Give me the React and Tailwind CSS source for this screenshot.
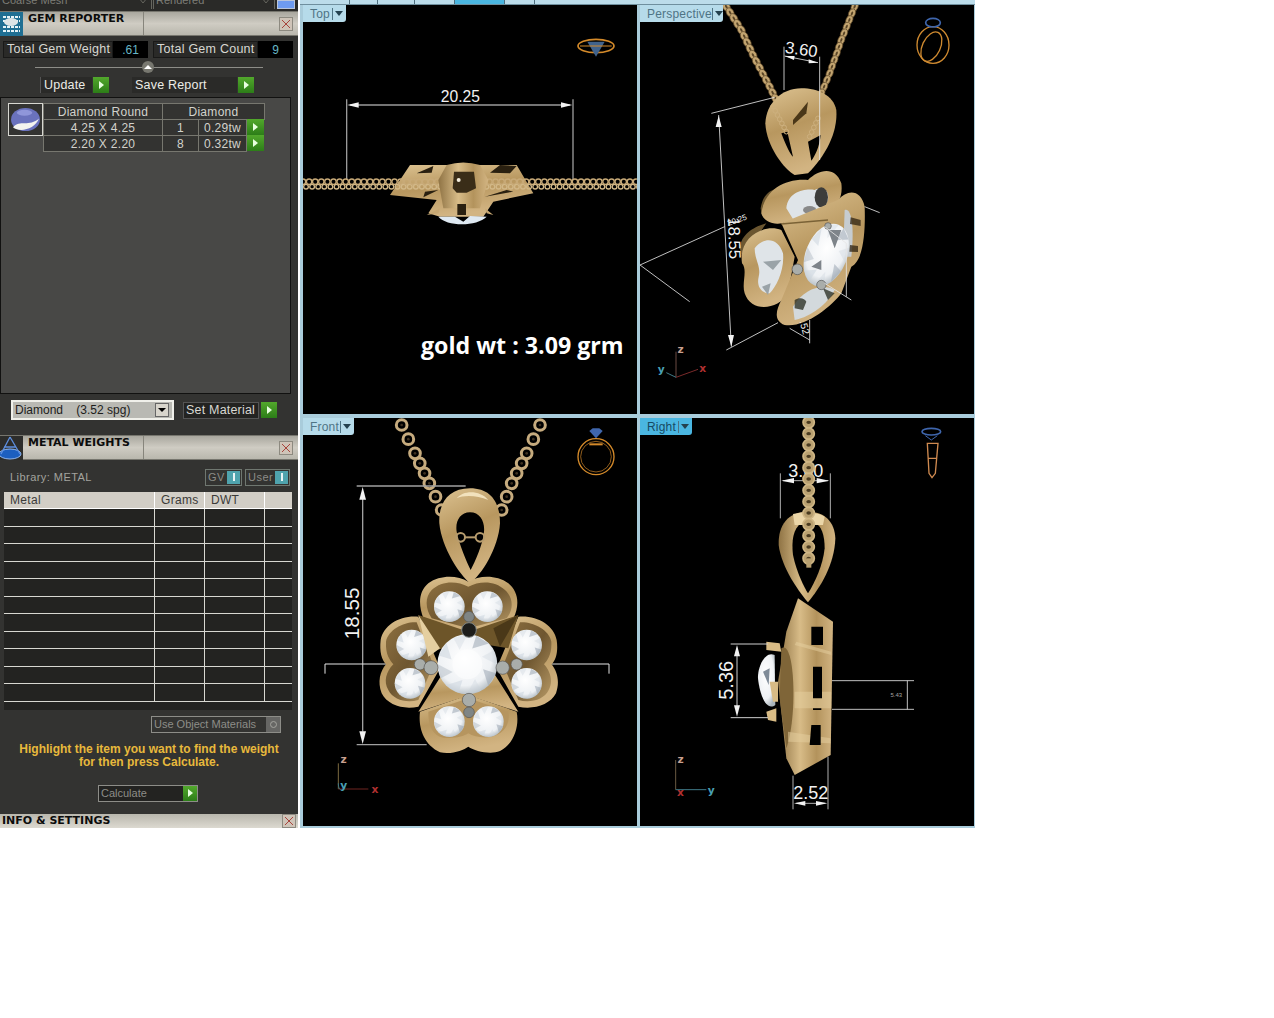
const along = (pts, step) => {
    const out = [];
    for (let i = 0; i < pts.length - 1; i++) {
        const [x1, y1] = pts[i];
        const [x2, y2] = pts[i + 1];
        const len = Math.hypot(x2 - x1, y2 - y1);
        const n = Math.max(1, Math.round(len / step));
        for (let k = 0; k < n; k++) out.push([x1 + ((x2 - x1) * k) / n, y1 + ((y2 - y1) * k) / n]);
    }
    out.push(pts[pts.length - 1]);
    return out;
};

const Play = ({ size = "w-4 h-4" }) => (
    <span className={`${size} shrink-0 flex items-center justify-center bg-gradient-to-b from-[#52a82c] to-[#2c7d18]`}>
        <span className="w-0 h-0 border-y-[4px] border-y-transparent border-l-[5px] border-l-[#e8ffe0]" />
    </span>
);

const Close = () => (
    <span className="w-[14px] h-[14px] flex items-center justify-center bg-[#cfc4b8] border border-[#8d8a80]">
        <svg viewBox="0 0 12 12" className="w-3 h-3">
            <path d="M2 2 L10 10 M10 2 L2 10" stroke="#a8443c" strokeWidth="1" />
        </svg>
    </span>
);

const PanelHeader = ({ title, icon }) => (
    <div className="h-[25px] flex bg-gradient-to-b from-[#a9a79e] via-[#cfccc3] to-[#b9b7ad] border-y border-[#77766e]">
        <div className="w-[23px] shrink-0">{icon}</div>
        <div className="w-[121px] pl-[5px] border-r border-[#87857c] font-['DejaVu_Sans'] font-bold text-[11px] leading-[11px] pt-[1px] text-[#0c0c0c] whitespace-nowrap">
            {title}
        </div>
        <div className="flex-1 flex justify-end items-center pr-[5px]">
            <Close />
        </div>
    </div>
);

const GemIcon = () => (
    <svg viewBox="0 0 23 24" className="w-[23px] h-[24px]">
        <rect width="23" height="24" fill="#1f6f93" />
        <path d="M3 5 H20 M3 9 H9 M15 9 H20 M3 19 H20 M3 15 H20" stroke="#e5f3f7" strokeWidth="2" strokeDasharray="3 1" />
        <ellipse cx="11" cy="10" rx="7" ry="4" fill="#dce4e6" />
    </svg>
);

const ScaleIcon = () => (
    <svg viewBox="0 0 23 24" className="w-[23px] h-[24px]">
        <rect width="23" height="24" fill="#2d2d2b" />
        <ellipse cx="10" cy="18" rx="11" ry="5" fill="#1c5fc0" stroke="#8fb6ee" />
        <path d="M10 1 L1 18 M10 1 L20 18 M4 11 H16" stroke="#5d8fe0" strokeWidth="1.3" fill="none" />
    </svg>
);

const StatBox = ({ label, value, labelW }) => (
    <div className="flex h-[17px] items-stretch">
        <div className={`${labelW} bg-[#2a2a28] border border-[#191918] flex items-center pl-[3px] text-[12.5px] tracking-[0.25px] text-[#d8d8d2] whitespace-nowrap`}>
            {label}
        </div>
        <div className="w-[35px] bg-black flex items-center justify-center text-[12px] text-[#68b8c8]">{value}</div>
    </div>
);

const GemCell = ({ className, children }) => (
    <div className={`border border-[#77776f] -ml-px -mt-px flex items-center justify-center text-[12px] tracking-[0.3px] text-[#d2d2cc] bg-[#333331] ${className}`}>
        {children}
    </div>
);

const GemRow = ({ size, count, weight }) => (
    <div className="flex h-[16px]">
        <GemCell className="w-[120px]">{size}</GemCell>
        <GemCell className="w-[37px]">{count}</GemCell>
        <GemCell className="w-[49px]">{weight}</GemCell>
        <span className="-mt-px"><Play size="w-[17px] h-[16px]" /></span>
    </div>
);

const ToggleChip = ({ label, w }) => (
    <div className={`${w} h-[17px] border border-[#6f7770] flex items-center justify-between pl-[2px] pr-px text-[11px] tracking-[0.5px] text-[#8d8d88]`}>
        {label}
        <span className="w-[13px] h-[13px] bg-[#4fa3ad] flex items-center justify-center">
            <span className="w-[2px] h-[8px] bg-[#e9f4f4]" />
        </span>
    </div>
);

const Chevron = () => (
    <svg viewBox="0 0 10 6" className="w-[10px] h-[6px] shrink-0 -mt-[2px]">
        <path d="M1 0 L5 5 L9 0" stroke="#66665f" fill="none" />
    </svg>
);

const rows = [0, 1, 2, 3, 4, 5, 6, 7, 8, 9, 10];

const Sidebar = () => (
    <div className="w-[298px] h-[828px] shrink-0 bg-[#333331] flex flex-col font-['Liberation_Sans',sans-serif] overflow-hidden">
        <div className="h-[11px] flex items-start gap-px bg-[#2a2a28] text-[11px] leading-[11px] text-[#7d7d77]">
            <div className="w-[152px] h-[9px] overflow-hidden border-r border-[#66665f] pl-[2px] flex justify-between pr-[3px]">
                <span className="-mt-[5px]">Coarse Mesh</span>
                <Chevron />
            </div>
            <div className="w-[122px] h-[9px] overflow-hidden border-x border-[#66665f] pl-[2px] flex justify-between pr-[3px]">
                <span className="-mt-[5px]">Rendered</span>
                <Chevron />
            </div>
            <div className="ml-[1px] w-[18px] h-[9px] bg-[#6e9bf0] border border-[#b9c5da]" />
        </div>
        <PanelHeader title="GEM REPORTER" icon={<GemIcon />} />

        <div className="flex justify-between pl-[3px] pr-[5px] mt-[5px]">
            <StatBox label="Total Gem Weight" value=".61" labelW="w-[110px]" />
            <StatBox label="Total Gem Count" value="9" labelW="w-[105px]" />
        </div>

        <div className="relative h-[19px] mx-[35px] flex items-center">
            <div className="w-full h-px bg-[#8d8d88]" />
            <span className="absolute left-[107px] top-[3px] w-[12px] h-[12px] rounded-full bg-[#77776f] flex items-center justify-center">
                <span className="w-0 h-0 border-x-[4px] border-x-transparent border-b-[4px] border-b-white" />
            </span>
        </div>

        <div className="flex h-[16px] pl-[40px] text-[12.5px] tracking-[0.2px] text-[#ecece6]">
            <div className="w-[52px] bg-[#2a2a28] border-l border-[#555] flex items-center pl-[3px]">Update</div>
            <span className="ml-[1px]"><Play /></span>
            <div className="ml-[23px] w-[105px] bg-[#2a2a28] flex items-center pl-[3px]">Save Report</div>
            <span className="ml-[1px]"><Play /></span>
        </div>

        <div className="mt-[4px] w-[291px] h-[297px] bg-[#484846] border border-[#111110] pl-[7px] pt-[5px] flex">
            <div className="w-[35px] h-[33px] shrink-0 bg-[#333331] border border-[#d8d8d2] flex items-center justify-center">
                <svg viewBox="0 0 32 28" className="w-[31px] h-[27px]">
                    <ellipse cx="16" cy="14" rx="15" ry="12" fill="#6a72bd" />
                    <ellipse cx="15" cy="7" rx="8" ry="3" fill="#8f96da" />
                    <path d="M3 22 C10 14 20 22 30 13 C26 24 10 28 3 22 Z" fill="#f4f4ef" />
                </svg>
            </div>
            <div className="pl-px pt-px">
                <div className="flex h-[16px]">
                    <GemCell className="w-[120px]">Diamond Round</GemCell>
                    <GemCell className="w-[103px]">Diamond</GemCell>
                </div>
                <GemRow size="4.25 X 4.25" count="1" weight="0.29tw" />
                <GemRow size="2.20 X 2.20" count="8" weight="0.32tw" />
            </div>
        </div>

        <div className="flex items-center h-[20px] mt-[6px] pl-[11px]">
            <div className="w-[163px] h-[20px] bg-[#b9b9b3] border-2 border-[#f0f0ea] flex items-center justify-between pl-[2px] pr-[3px] text-[12px] text-[#1d1d1b] whitespace-pre">
                <span>Diamond    (3.52 spg)</span>
                <span className="w-[14px] h-[14px] bg-[#d8d5cc] border border-[#666] flex items-center justify-center">
                    <span className="w-0 h-0 border-x-[4px] border-x-transparent border-t-[4px] border-t-black" />
                </span>
            </div>
            <div className="ml-[9px] w-[76px] h-[17px] bg-[#232321] border border-[#555] flex items-center pl-[2px] text-[12.5px] tracking-[0.2px] text-[#d8d8d2] whitespace-nowrap">Set Material</div>
            <span className="ml-[2px]"><Play /></span>
        </div>

        <div className="mt-[15px]">
            <PanelHeader title="METAL WEIGHTS" icon={<ScaleIcon />} />
        </div>

        <div className="flex items-center h-[18px] mt-[8px] pl-[10px] pr-[8px]">
            <span className="text-[11px] tracking-[0.45px] text-[#a3a39e]">Library: METAL</span>
            <div className="ml-auto flex gap-[3px]">
                <ToggleChip label="GV" w="w-[37px]" />
                <ToggleChip label="User" w="w-[45px]" />
            </div>
        </div>

        <div className="mt-[6px] ml-[4px] w-[288px] bg-[#232321]">
            <div className="flex h-[17px] bg-[#d2cec6] border-b border-white text-[12px] tracking-[0.3px] text-[#3a3a38]">
                <div className="w-[150px] pl-[6px] flex items-center">Metal</div>
                <div className="w-[50px] border-l border-white pl-[6px] flex items-center">Grams</div>
                <div className="w-[60px] border-l border-white pl-[6px] flex items-center">DWT</div>
                <div className="flex-1 border-l border-white" />
            </div>
            <div>
                {rows.map((r) => (
                    <div key={r} className="flex h-[17.5px] border-b border-[#d8d8d2]">
                        <div className="w-[150px]" />
                        <div className="w-[50px] border-l border-[#d8d8d2]" />
                        <div className="w-[60px] border-l border-[#d8d8d2]" />
                        <div className="flex-1 border-l border-[#d8d8d2]" />
                    </div>
                ))}
                <div className="h-[8px]" />
            </div>
        </div>

        <div className="flex justify-end pr-[17px] mt-[6px]">
            <div className="w-[130px] h-[17px] border border-[#8d8d88] flex items-center justify-between pl-[2px] text-[11px] text-[#8d8d88] whitespace-nowrap">
                Use Object Materials
                <span className="w-[14px] h-[15px] bg-[#666664] flex items-center justify-center">
                    <span className="w-[7px] h-[7px] rounded-full border border-[#a3a39e]" />
                </span>
            </div>
        </div>

        <p className="mt-[10px] text-center text-[12px] leading-[13px] font-bold text-[#e8b93c]">
            Highlight the item you want to find the weight
            <br />
            for then press Calculate.
        </p>

        <div className="mt-[16px] ml-[98px] w-[100px] h-[17px] border border-[#8d8d88] bg-[#232321] flex items-center justify-between pl-[2px] text-[11px] text-[#8d8d88]">
            Calculate
            <Play size="w-[14px] h-[15px]" />
        </div>

        <div className="mt-auto h-[14px] flex items-center justify-between pr-[2px] bg-gradient-to-b from-[#b9b7ad] to-[#dcd9d0] font-['DejaVu_Sans'] font-bold text-[11px] text-[#0c0c0c]">
            <span className="pl-[2px]">INFO &amp; SETTINGS</span>
            <Close />
        </div>
    </div>
);

const Defs = () => (
    <svg className="absolute w-0 h-0">
        <defs>
            <linearGradient id="gold" x1="0" y1="0" x2="0.3" y2="1">
                <stop offset="0" stopColor="#dcc291" />
                <stop offset="0.5" stopColor="#b8975f" />
                <stop offset="1" stopColor="#d2b482" />
            </linearGradient>
            <linearGradient id="goldSide" x1="0" y1="0" x2="1" y2="0">
                <stop offset="0" stopColor="#8f7344" />
                <stop offset="0.4" stopColor="#d8bc88" />
                <stop offset="0.7" stopColor="#b3935c" />
                <stop offset="1" stopColor="#d2b482" />
            </linearGradient>
            <linearGradient id="goldDark" x1="0" y1="0" x2="1" y2="1">
                <stop offset="0" stopColor="#8d7040" />
                <stop offset="0.5" stopColor="#6e5630" />
                <stop offset="1" stopColor="#b89a66" />
            </linearGradient>
            <radialGradient id="gem" cx="0.45" cy="0.4" r="0.65">
                <stop offset="0" stopColor="#ffffff" />
                <stop offset="0.7" stopColor="#eef1f4" />
                <stop offset="1" stopColor="#aab4bb" />
            </radialGradient>
        </defs>
    </svg>
);

const Gem = ({ x, y, r, ry, rot = 0 }) => {
    const h = ry || r;
    return (
        <g transform={`translate(${x} ${y}) rotate(${rot})`}>
            <ellipse rx={r} ry={h} fill="url(#gem)" />
            {[0, 1, 2, 3, 4, 5, 6, 7].map((i) => {
                const a = (i * Math.PI) / 4 + 0.3;
                const b = a + 0.5;
                return (
                    <path
                        key={i}
                        d={`M${(Math.cos(a) * r * 0.55).toFixed(1)} ${(Math.sin(a) * h * 0.55).toFixed(1)} L${(Math.cos(a) * r).toFixed(1)} ${(Math.sin(a) * h).toFixed(1)} L${(Math.cos(b) * r).toFixed(1)} ${(Math.sin(b) * h).toFixed(1)} Z`}
                        fill={i % 3 === 0 ? "#9aa6b2" : "#ccd5de"}
                        opacity={i % 2 ? 0.35 : 0.55}
                    />
                );
            })}
        </g>
    );
};

const Prong = ({ x, y, r = 17, fill = "#a9adaa" }) => <circle cx={x} cy={y} r={r} fill={fill} stroke="#555" strokeWidth="2" />;

const Arrow = ({ x, y, dir, size = 34, wide = 9, fill = "#f2f2f2" }) => {
    const d = {
        up: `M${x} ${y} L${x - wide} ${y + size} L${x + wide} ${y + size} Z`,
        down: `M${x} ${y} L${x - wide} ${y - size} L${x + wide} ${y - size} Z`,
        left: `M${x} ${y} L${x + size} ${y - wide} L${x + size} ${y + wide} Z`,
        right: `M${x} ${y} L${x - size} ${y - wide} L${x - size} ${y + wide} Z`,
    }[dir];
    return <path d={d} fill={fill} />;
};

const Axis = ({ lines, labels }) => (
    <g fontFamily="'DejaVu Sans', sans-serif" fontSize="32" fontWeight="bold">
        {lines.map((l, i) => (
            <path key={i} d={l.d} stroke={l.c} strokeWidth="3" fill="none" />
        ))}
        {labels.map((l) => (
            <text key={l.t} x={l.x} y={l.y} fill={l.c} textAnchor="middle">
                {l.t}
            </text>
        ))}
    </g>
);

const dimText = { fill: "#f2f2f2", fontFamily: "'Liberation Sans', sans-serif", textAnchor: "middle" };

const TopView = () => (
    <svg viewBox="9 15 1002 1227" className="absolute inset-0 w-full h-full">
        <g stroke="#9a9a9a" strokeWidth="4" fill="none">
            <path d="M140 298 V540 M819 298 V540 M150 315 H810" />
        </g>
        <Arrow x={142} y={315} dir="left" wide={8} />
        <Arrow x={817} y={315} dir="right" wide={8} />
        <text x="481" y="306" fontSize="47" {...dimText}>20.25</text>
        <path d="M330 495 L650 495 L700 580 L580 605 L550 650 L420 650 L385 640 L410 600 L270 585 Z" fill="url(#gold)" />
        <path d="M350 520 L400 498 L395 518 Z M600 495 L650 498 L630 520 L570 518 Z M375 575 L415 570 L370 592 Z M555 590 L620 570 L640 575 Z" fill="#2a2010" />
        {along([[9, 545], [430, 545]], 18).concat(along([[550, 545], [1008, 545]], 18)).map(([x, y], i) => (
            <g key={i}>
                <circle cx={x} cy={y} r="8" fill="none" stroke="#c8aa78" strokeWidth="4" />
                <circle cx={x + 9} cy={y + 15} r="7" fill="none" stroke="#d2b888" strokeWidth="4" />
            </g>
        ))}
        <path d="M440 495 Q490 480 540 495 L565 540 L540 625 L430 625 L415 540 Z" fill="url(#goldSide)" />
        <path d="M462 515 H522 L528 565 L500 578 H470 L458 565 Z" fill="#3a2d18" />
        <circle cx="476" cy="540" r="6" fill="#f5eedd" />
        <path d="M415 650 C440 680 530 680 560 650 L510 648 L490 665 L465 650 Z" fill="#dfe9f2" />
        <path d="M472 612 H498 V645 H472 Z" fill="#2a2010" />
        <path d="M380 645 L420 625 L415 640 Z M580 645 L555 625 L560 640 Z" fill="#c8a873" />
        <ellipse cx="888" cy="138" rx="54" ry="20" fill="none" stroke="#d48a2a" strokeWidth="5" />
        <path d="M862 125 L914 125 L888 170 Z" fill="#41638c" />
        <path d="M840 138 H935" stroke="#d48a2a" strokeWidth="3" />
    </svg>
);

const PerspectiveView = () => (
    <svg viewBox="6 15 1002 1227" className="absolute inset-0 w-full h-full">
        {along([[265, 20], [310, 90], [345, 165], [395, 260], [440, 350], [465, 400]], 21).map(([x, y], i) => (
            <g key={i} transform={`rotate(60 ${x} ${y})`}>
                <ellipse cx={x} cy={y} rx="15" ry="11" fill="#c2a470" stroke="#5a4526" strokeWidth="2" />
                <ellipse cx={x} cy={y} rx="6" ry="3" fill="#5a4526" />
            </g>
        ))}
        {along([[650, 20], [610, 120], [575, 220], [550, 280]], 21).map(([x, y], i) => (
            <g key={i} transform={`rotate(-68 ${x} ${y})`}>
                <ellipse cx={x} cy={y} rx="14" ry="10" fill="#c2a470" stroke="#5a4526" strokeWidth="2" />
                <ellipse cx={x} cy={y} rx="6" ry="3" fill="#5a4526" />
            </g>
        ))}
        <path d="M490 265 C430 265 385 310 382 370 C385 440 440 510 470 525 L510 520 C560 470 600 400 595 330 C585 285 540 265 490 265 Z" fill="url(#gold)" />
        <path d="M430 400 C445 440 458 465 465 470 L448 395 Z M510 425 L548 405 C545 440 530 470 520 482 Z" fill="#000" />
        <path d="M465 360 L510 305 L505 340 L465 375 Z" fill="#4a3718" />
        {along([[405, 320], [445, 395]], 15).concat(along([[540, 355], [515, 410]], 15)).map(([x, y], i) => (
            <circle key={i} cx={x} cy={y} r="7" fill="none" stroke="#cdb07e" strokeWidth="3" />
        ))}
        <path d="M368 625 C375 580 400 570 420 565 L430 670 C395 670 370 660 368 625 Z M305 745 C310 700 350 680 385 670 L350 720 L320 800 Z" fill="#6b5630" />
        <path d="M370 640 C380 570 440 535 510 540 C540 510 590 495 610 550 C615 590 600 610 580 640 L430 670 C400 675 375 660 370 640 Z" fill="url(#gold)" />
        <path d="M445 625 C450 575 500 565 530 570 C550 560 575 565 570 600 L555 630 L470 665 Z" fill="#dfe4e8" />
        <ellipse cx="550" cy="592" rx="20" ry="30" fill="#3d3d3b" />
        <ellipse cx="515" cy="630" rx="20" ry="12" fill="#888" />
        <path d="M312 790 C300 710 380 670 430 690 L470 770 L450 880 C420 930 340 940 320 880 C310 850 330 810 312 790 Z" fill="url(#gold)" />
        <path d="M350 745 C375 710 420 710 435 760 C440 810 415 860 395 880 C370 880 355 860 362 830 C370 800 350 780 350 745 Z" fill="#dfe4e8" />
        <path d="M375 785 L430 780 L405 810 Z M372 860 L398 850 L390 885 Z" fill="#9aa3a8" />
        <path d="M600 600 C630 565 670 570 680 620 C682 680 680 780 640 800 L610 880 C580 920 500 985 440 975 C405 960 415 930 430 900 L480 780 L430 670 Z" fill="url(#gold)" />
        <path d="M620 630 C640 620 650 680 640 770 L615 770 Z" fill="#c6ccd0" />
        <path d="M638 652 L668 660 V678 L636 672 Z M636 735 L660 738 V756 L634 755 Z" fill="#2d2110" opacity="0.75" />
        <path d="M465 920 C500 860 560 850 590 870 C570 910 520 950 470 960 Z" fill="#d3d9dc" />
        <path d="M470 900 C485 890 500 895 505 905 L495 930 L470 925 Z M555 865 L590 880 L570 900 Z" fill="#25291f" opacity="0.75" />
        <Gem x={565} y={765} r={62} ry={98} rot={22} />
        <path d="M570 690 L610 690 L590 745 Z M520 800 L550 780 L550 810 Z" fill="#7e848a" />
        <Prong x={478} y={808} r={16} />
        <Prong x={570} y={678} r={10} />
        <Prong x={550} y={855} r={14} />
        <path d="M430 672 L570 660" stroke="#7a6236" strokeWidth="5" />
        <g stroke="#e6e6e6" strokeWidth="2.5" fill="none">
            <path d="M220 340 L410 292 M242 345 L280 1040 M265 1050 L420 968" />
            <path d="M438 140 V270 M545 170 V480 M440 168 L540 188" />
            <path d="M680 620 L725 638 M6 795 L260 680 M6 795 L155 905" />
            <path d="M560 680 L625 730 V890 M560 850 L640 900 M455 985 L515 1020 M515 960 V1030" />
        </g>
        <Arrow x={242} y={347} dir="up" wide={9} />
        <path d="M280 1040 L270 1005 L288 1005 Z" fill="#f2f2f2" />
        <path d="M440 168 L470 168 L468 180 Z M540 188 L512 178 L512 190 Z" fill="#f2f2f2" />
        <text transform="translate(488 165) rotate(8)" fontSize="50" {...dimText}>3.60</text>
        <text transform="translate(272 715) rotate(88)" fontSize="50" {...dimText}>18.55</text>
        <text transform="translate(300 668) rotate(-20)" fontSize="24" {...dimText}>20.25</text>
        <text transform="translate(490 985) rotate(75)" fontSize="30" {...dimText}>.52</text>
        <g fill="none" stroke="#cf8a30" strokeWidth="4">
            <ellipse cx="885" cy="135" rx="48" ry="55" />
            <ellipse cx="880" cy="140" rx="27" ry="47" transform="rotate(25 880 140)" />
        </g>
        <ellipse cx="885" cy="68" rx="22" ry="13" fill="none" stroke="#3f66ad" strokeWidth="5" />
        <Axis
            lines={[
                { d: "M114 1055 V1132", c: "#6a4a42" },
                { d: "M114 1132 L85 1118", c: "#3f7a88" },
                { d: "M114 1132 L180 1108", c: "#7a2a2a" },
            ]}
            labels={[
                { t: "z", x: 128, y: 1058, c: "#c9a090" },
                { t: "y", x: 70, y: 1118, c: "#4aa0b5" },
                { t: "x", x: 194, y: 1116, c: "#b03030" },
            ]}
        />
    </svg>
);

const FrontView = () => (
    <svg viewBox="9 9 1002 1224" className="absolute inset-0 w-full h-full">
        {along([[305, 30], [345, 115], [388, 205], [425, 285]], 38).concat(along([[720, 30], [680, 115], [635, 205], [605, 285]], 38)).map(([x, y], i) => (
            <g key={i}>
                <circle cx={x} cy={y} r="16" fill="none" stroke="#c6ab7e" strokeWidth="9" />
                <circle cx={x} cy={y} r="4" fill="#3d3020" />
            </g>
        ))}
        <path fillRule="evenodd" d="M510 220 C445 220 415 265 418 325 C425 400 480 480 510 505 C545 480 595 400 600 325 C600 265 575 220 510 220 Z M510 292 C480 292 465 320 470 350 C478 390 500 440 512 465 C525 440 548 390 552 350 C555 320 540 292 510 292 Z" fill="url(#gold)" />
        <path d="M470 250 C490 225 540 225 565 255 C530 240 490 240 470 250 Z" fill="#f2e2bd" />
        <g fill="none" stroke="#b79c6e" strokeWidth="6">
            <circle cx="482" cy="367" r="13" />
            <circle cx="540" cy="367" r="13" />
            <path d="M495 367 H527" />
        </g>
        <g stroke="#a0a0a0" strokeWidth="4" fill="none">
            <path d="M170 213 H497 M170 989 H380 M188 250 V950" />
        </g>
        <Arrow x={188} y={216} dir="up" wide={10} size={38} />
        <Arrow x={188} y={987} dir="down" wide={10} size={38} />
        <path d="M75 776 V747 H260 M755 747 H927 V776" stroke="#e6e6e6" strokeWidth="3" fill="none" />
        <text transform="translate(178 595) rotate(-90)" fontSize="62" {...dimText}>18.55</text>

        <path d="M505 500 C470 480 420 480 385 505 C355 530 355 570 370 610 L505 660 L640 610 C660 570 655 530 625 505 C590 480 540 480 505 500 Z" fill="url(#gold)" />
        <path d="M505 515 C470 497 425 497 395 525 C372 550 378 585 395 610 L505 640 L620 610 C640 585 642 550 615 525 C585 497 540 497 505 515 Z" fill="url(#goldDark)" />
        <path d="M355 605 C300 600 250 630 242 675 C238 710 245 735 258 748 C240 770 232 800 245 835 C262 870 310 885 355 875 L420 760 Z" fill="url(#gold)" />
        <path d="M350 622 C310 620 265 645 258 680 C256 720 270 735 280 748 C258 770 250 800 265 825 C280 855 320 865 355 855 L400 750 Z" fill="url(#goldDark)" />
        <path d="M655 605 C710 600 762 630 770 675 C775 710 768 735 755 748 C772 770 780 800 768 835 C750 870 700 885 655 875 L590 760 Z" fill="url(#gold)" />
        <path d="M660 622 C700 620 748 645 754 680 C756 720 742 735 732 748 C752 770 760 800 746 825 C732 855 690 865 655 855 L610 750 Z" fill="url(#goldDark)" />
        <path d="M360 890 C355 930 365 985 420 1012 C455 1020 490 1005 505 995 C525 1008 570 1020 600 1008 C645 985 658 930 650 890 L505 840 Z" fill="url(#gold)" />
        <path d="M385 890 C385 930 395 960 430 968 C460 972 490 965 505 955 C525 968 565 972 590 960 C622 945 630 915 625 890 L505 850 Z" fill="#b6955f" />

        {[[448, 575], [562, 575], [335, 690], [330, 805], [680, 690], [680, 805], [448, 920], [565, 920]].map(([x, y]) => (
            <Gem key={`${x}-${y}`} x={x} y={y} r={46} />
        ))}

        <path d="M355 600 L505 650 L655 600 L625 700 L505 680 L390 710 Z" fill="#6d5529" />
        <path d="M355 600 L420 700 L385 725 Z" fill="#e5cfa0" />
        <path d="M655 600 L600 695 L580 640 Z" fill="#4a3818" />
        <path d="M355 890 L425 780 L505 830 L585 780 L655 890 L530 850 L505 870 L480 850 Z" fill="url(#gold)" />
        <Gem x={502} y={748} r={90} />
        <circle cx="502" cy="748" r="45" fill="#ffffff" opacity="0.5" />
        <Prong x={507} y={605} r={16} fill="#7f8585" />
        <circle cx="507" cy="645" r="22" fill="#1d1d1b" stroke="#7f8585" strokeWidth="3" />
        <Prong x={507} y={855} r={20} />
        <Prong x={507} y={892} r={16} fill="#7f8585" />
        <Prong x={360} y={748} r={17} />
        <Prong x={393} y={758} r={21} />
        <Prong x={608} y={758} r={20} />
        <Prong x={650} y={748} r={17} />

        <g fill="none" stroke="#d48a2a">
            <circle cx="888" cy="125" r="54" strokeWidth="4" />
            <circle cx="888" cy="125" r="46" strokeWidth="2" />
            <path d="M868 88 H908" strokeWidth="6" />
        </g>
        <path d="M868 48 L878 40 H898 L908 48 L888 70 Z" fill="#3f66ad" />
        <Axis
            lines={[
                { d: "M115 1045 V1122", c: "#7c6a40" },
                { d: "M115 1122 H205", c: "#6e2420" },
                { d: "M115 1105 C115 1130 130 1130 135 1115", c: "#3f7a88" },
            ]}
            labels={[
                { t: "z", x: 131, y: 1044, c: "#c9a090" },
                { t: "y", x: 131, y: 1122, c: "#4aa0b5" },
                { t: "x", x: 225, y: 1134, c: "#b03030" },
            ]}
        />
    </svg>
);

const RightView = () => (
    <svg viewBox="6 9 1002 1224" className="absolute inset-0 w-full h-full">
        <text x="503" y="185" fontSize="54" {...dimText}>3.60</text>
        <g stroke="#b0b0b0" strokeWidth="3" fill="none">
            <path d="M427 175 V310 M577 175 V310 M435 197 H570" />
        </g>
        <Arrow x={430} y={197} dir="left" size={38} wide={8} />
        <Arrow x={574} y={197} dir="right" size={38} wide={8} />
        <path d="M510 290 C450 290 420 330 422 390 C430 460 490 540 510 562 C545 520 590 450 592 370 C590 320 560 290 510 290 Z" fill="url(#goldSide)" />
        <path d="M490 325 C465 340 460 380 465 420 C475 470 500 520 510 535 C530 505 555 450 560 400 C560 360 550 330 530 325 Z" fill="#000" />
        <path d="M465 297 C490 290 540 290 560 305 L555 330 H470 Z" fill="#ebd6a8" />
        {along([[512, 22], [512, 430]], 34).map(([x, y], i) => (
            <g key={i}>
                <circle cx={x} cy={y} r="17" fill="#b9a070" stroke="#cfb685" strokeWidth="5" />
                <ellipse cx={x} cy={y} rx="7" ry="5" fill="#4a3b20" />
            </g>
        ))}
        <path d="M505 430 H520 V458 H505 Z" fill="#b9a070" />

        <path d="M480 550 L585 620 L578 1020 L470 1080 L445 1030 L420 800 L445 650 Z" fill="url(#goldSide)" />
        <path d="M430 700 C470 670 480 900 445 1000 L425 850 Z" fill="#7f6538" />
        <path d="M475 680 L580 710 V720 L470 690 Z M470 830 H580 V880 L470 880 Z M450 950 L578 970 V985 L450 980 Z" fill="#e6cf9f" opacity="0.5" />
        <path d="M520 635 H555 V690 H520 Z M525 755 H552 V850 H525 Z M525 880 H550 V885 H525 Z M520 930 H548 V990 H515 Z" fill="#000" />
        <path d="M410 720 C380 705 358 760 360 790 C365 840 385 890 412 870 Z" fill="url(#gem)" />
        <path d="M375 770 L395 760 L392 810 Z" fill="#7f8b98" />
        <path d="M385 680 L425 685 L430 710 L385 705 Z M385 890 L415 880 L415 920 L390 915 Z M395 800 L420 800 V860 L405 860 Z" fill="#d8bb85" />

        <g stroke="#cfcfcf" strokeWidth="3" fill="none">
            <path d="M278 687 H390 M278 908 H390 M297 720 V875" />
        </g>
        <Arrow x={297} y={690} dir="up" wide={9} size={34} />
        <Arrow x={297} y={905} dir="down" wide={9} size={34} />
        <text transform="translate(285 796) rotate(-90)" fontSize="60" {...dimText}>5.36</text>
        <g stroke="#e6e6e6" strokeWidth="2.5" fill="none">
            <path d="M582 797 H828 M582 883 H828 M808 797 V883" />
        </g>
        <text x="775" y="846" fontSize="18" fill="#a3a3a3" fontFamily="'Liberation Sans', sans-serif" textAnchor="middle">5.43</text>

        <g stroke="#b0b0b0" strokeWidth="3" fill="none">
            <path d="M465 1082 V1183 M570 1025 V1183 M475 1165 H562" />
        </g>
        <Arrow x={468} y={1165} dir="left" size={34} wide={7} />
        <Arrow x={568} y={1165} dir="right" size={34} wide={7} />
        <text x="518" y="1152" fontSize="54" {...dimText}>2.52</text>

        <ellipse cx="880" cy="50" rx="28" ry="10" fill="none" stroke="#3f66ad" strokeWidth="5" />
        <path d="M862 62 L880 75 L898 62" stroke="#3f66ad" strokeWidth="3" fill="none" />
        <path d="M868 85 H900 L892 175 L882 188 L873 175 Z M870 130 H896" fill="none" stroke="#cf8a50" strokeWidth="4" />
        <Axis
            lines={[
                { d: "M113 1035 V1124", c: "#6a5a42" },
                { d: "M113 1124 H205", c: "#3f7a88" },
            ]}
            labels={[
                { t: "z", x: 128, y: 1044, c: "#c9a090" },
                { t: "y", x: 220, y: 1138, c: "#4aa0b5" },
                { t: "x", x: 127, y: 1142, c: "#b03030" },
            ]}
        />
    </svg>
);

const Viewport = ({ label, w, active, children }) => (
    <div className="relative bg-black overflow-hidden">
        {children}
        <div className={`absolute left-0 top-0 ${w} h-[17px] rounded-br-[3px] flex items-center justify-between pl-[7px] pr-[3px] font-['Liberation_Sans',sans-serif] text-[12px] tracking-[0.2px] ${active ? "bg-[#4ab6e1] text-[#174a63]" : "bg-[#b6dbea] text-[#4f7485]"}`}>
            {label}
            <span className="flex items-center gap-[2px] h-full">
                <span className="w-px h-[12px] bg-[#4f7485]" />
                <span className="w-0 h-0 border-x-[4px] border-x-transparent border-t-[5px] border-t-[#24414f]" />
            </span>
        </div>
    </div>
);

const tabs = ["w-[50px]", "w-[28px]", "w-[37px]", "w-[40px]", "w-[50px]", "w-[30px]"];

const Viewports = () => (
    <div className="w-[675px] h-[828px] ml-[2px] bg-[#a9ccdb] flex flex-col">
        <div className="h-[5px] flex shrink-0 bg-[#bcdcea] border-b border-[#6f8f9e]">
            {tabs.map((t, i) => (
                <div key={i} className={`${t} border-r border-[#4f6f7e] ${i === 4 ? "bg-[#4ab6e1]" : ""}`} />
            ))}
        </div>
        <div className="flex-1 grid grid-cols-[334px_334px] grid-rows-[409px_408px] gap-x-[3px] gap-y-[4px] pl-[3px] pb-px">
            <Viewport label="Top" w="w-[43px]">
                <TopView />
                <span className="absolute left-[118px] top-[324px] font-['Open_Sans',sans-serif] font-bold text-[23.2px] leading-[32px] text-white whitespace-nowrap">
                    gold wt : 3.09 grm
                </span>
            </Viewport>
            <Viewport label="Perspective" w="w-[83px]">
                <PerspectiveView />
            </Viewport>
            <Viewport label="Front" w="w-[51px]">
                <FrontView />
            </Viewport>
            <Viewport label="Right" w="w-[52px]" active>
                <RightView />
            </Viewport>
        </div>
    </div>
);

export default function App() {
    return (
        <div className="w-[1274px] h-[1018px] bg-white flex items-start overflow-hidden">
            <Defs />
            <Sidebar />
            <Viewports />
        </div>
    );
}
